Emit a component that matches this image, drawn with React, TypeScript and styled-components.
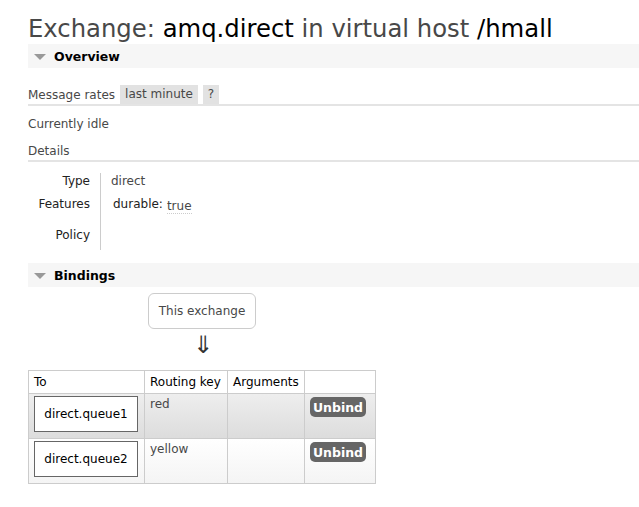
import React from 'react';
import styled, { createGlobalStyle } from 'styled-components';

const GlobalStyle = createGlobalStyle`
  html, body {
    margin: 0;
    padding: 0;
    background: #fff;
  }
  body {
    font-family: "DejaVu Sans", Verdana, sans-serif;
    font-size: 12px;
    color: #484848;
  }
`;

const Page = styled.div`
  padding: 0 0 0 28px;
  width: 611px;
`;

const Title = styled.h1`
  margin: 0;
  padding-top: 13px;
  height: 31px;
  font-size: 24.3px;
  font-weight: normal;
  line-height: 31px;
  color: #484848;
  white-space: nowrap;
`;

const Strong = styled.span`
  color: #000;
`;

const SectionHeader = styled.div<{ $top?: number }>`
  display: flex;
  align-items: center;
  height: 24px;
  background: #f6f6f6;
  padding-left: 6px;
  font-weight: bold;
  color: #000;
  font-size: 12.5px;
  margin-top: ${(p) => p.$top ?? 0}px;
`;

const Triangle = styled.span`
  width: 0;
  height: 0;
  border-left: 6px solid transparent;
  border-right: 6px solid transparent;
  border-top: 6px solid #999;
  margin-right: 8px;
  margin-top: 1px;
`;

const RatesRow = styled.div`
  display: flex;
  align-items: center;
  margin-top: 17px;
  height: 19px;
  border-bottom: 2px solid #e4e4e4;
  gap: 5px;
`;

const Pill = styled.span`
  background: #e2e2e2;
  padding: 0 5px;
  line-height: 19px;
  height: 19px;
  color: #484848;
`;

const Plain = styled.div<{ $top: number }>`
  margin-top: ${(p) => p.$top}px;
  line-height: 16px;
`;

const Ruled = styled.div`
  margin-top: 11px;
  line-height: 16px;
  padding-bottom: 1px;
  border-bottom: 2px solid #e4e4e4;
`;

const Details = styled.div`
  display: grid;
  grid-template-columns: 73px auto;
  margin-top: 11px;
`;

const Labels = styled.div`
  display: flex;
  flex-direction: column;
  align-items: flex-end;
  padding-right: 10px;
  border-right: 1px solid #ccc;
  color: #222;
  height: 77px;
`;

const Values = styled.div`
  display: flex;
  flex-direction: column;
  padding-left: 10px;
`;

const Cell = styled.div<{ $h: number }>`
  height: ${(p) => p.$h}px;
  line-height: 16px;
  display: flex;
  align-items: flex-start;
`;

const Key = styled.span`
  color: #222;
  margin-left: 2px;
  margin-right: 4px;
`;

const Abbr = styled.span`
  margin-top: 3px;
  border-bottom: 1px dotted #ccc;
  line-height: 14px;
`;

const Binding = styled.div`
  display: flex;
  flex-direction: column;
  align-items: flex-start;
`;

const ExchangeBox = styled.div`
  margin: 6px 0 0 120px;
  width: 106px;
  height: 34px;
  border: 1px solid #ccc;
  border-radius: 6px;
  display: flex;
  align-items: center;
  justify-content: center;
  color: #484848;
`;

const Arrow = styled.div`
  margin-left: 165px;
  font-size: 24px;
  line-height: 24px;
  height: 24px;
  color: #333;
  margin-top: 4px;
`;

const Table = styled.table`
  border-collapse: collapse;
  table-layout: fixed;
  width: 347px;
  margin-top: 13px;
  border: 1px solid #ccc;
  font-size: 12px;
`;

const Th = styled.th<{ $w: number }>`
  width: ${(p) => p.$w}px;
  box-sizing: border-box;
  text-align: left;
  font-weight: normal;
  color: #000;
  border: 1px solid #ccc;
  height: 23px;
  padding: 0 5px;
  white-space: nowrap;
`;

const Row = styled.tr<{ $alt?: boolean }>`
  background: ${(p) =>
    p.$alt
      ? 'linear-gradient(#ffffff, #f4f4f4)'
      : 'linear-gradient(#eeeeee, #dcdcdc)'};
`;

const Td = styled.td`
  border: 1px solid #ccc;
  vertical-align: top;
  height: 45px;
  box-sizing: border-box;
  padding: 3px 5px;
  color: #484848;
`;

const QueueCell = styled.td`
  border: 1px solid #ccc;
  padding: 2px 5px;
  vertical-align: top;
`;

const QueueBox = styled.div`
  width: 102px;
  height: 34px;
  border: 1px solid #666;
  background: #fff;
  display: flex;
  align-items: center;
  justify-content: center;
  color: #000;
`;

const UnbindButton = styled.button`
  font-family: inherit;
  font-size: 12.5px;
  font-weight: bold;
  color: #fff;
  background: #666;
  border: none;
  border-radius: 5px;
  height: 20px;
  width: 56px;
  padding: 0;
  cursor: pointer;
`;

const bindings = [
  { queue: 'direct.queue1', key: 'red' },
  { queue: 'direct.queue2', key: 'yellow' },
];

export default function App() {
  return (
    <>
      <GlobalStyle />
      <Page>
        <Title>
          Exchange: <Strong>amq.direct</Strong> in virtual host <Strong>/hmall</Strong>
        </Title>

        <SectionHeader>
          <Triangle />
          Overview
        </SectionHeader>

        <RatesRow>
          <span>Message rates</span>
          <Pill>last minute</Pill>
          <Pill>?</Pill>
        </RatesRow>

        <Plain $top={10}>Currently idle</Plain>
        <Ruled>Details</Ruled>

        <Details>
          <Labels>
            <Cell $h={23}>Type</Cell>
            <Cell $h={31}>Features</Cell>
            <Cell $h={23}>Policy</Cell>
          </Labels>
          <Values>
            <Cell $h={23}>direct</Cell>
            <Cell $h={31}>
              <Key>durable:</Key>
              <Abbr>true</Abbr>
            </Cell>
            <Cell $h={23} />
          </Values>
        </Details>

        <SectionHeader $top={13}>
          <Triangle />
          Bindings
        </SectionHeader>

        <Binding>
          <ExchangeBox>This exchange</ExchangeBox>
          <Arrow>⇓</Arrow>
          <Table>
            <thead>
              <tr>
                <Th $w={116}>To</Th>
                <Th $w={83}>Routing key</Th>
                <Th $w={77}>Arguments</Th>
                <Th $w={71} />
              </tr>
            </thead>
            <tbody>
              {bindings.map((b, i) => (
                <Row key={b.queue} $alt={i % 2 === 1}>
                  <QueueCell>
                    <QueueBox>{b.queue}</QueueBox>
                  </QueueCell>
                  <Td>{b.key}</Td>
                  <Td />
                  <Td>
                    <UnbindButton>Unbind</UnbindButton>
                  </Td>
                </Row>
              ))}
            </tbody>
          </Table>
        </Binding>
      </Page>
    </>
  );
}
